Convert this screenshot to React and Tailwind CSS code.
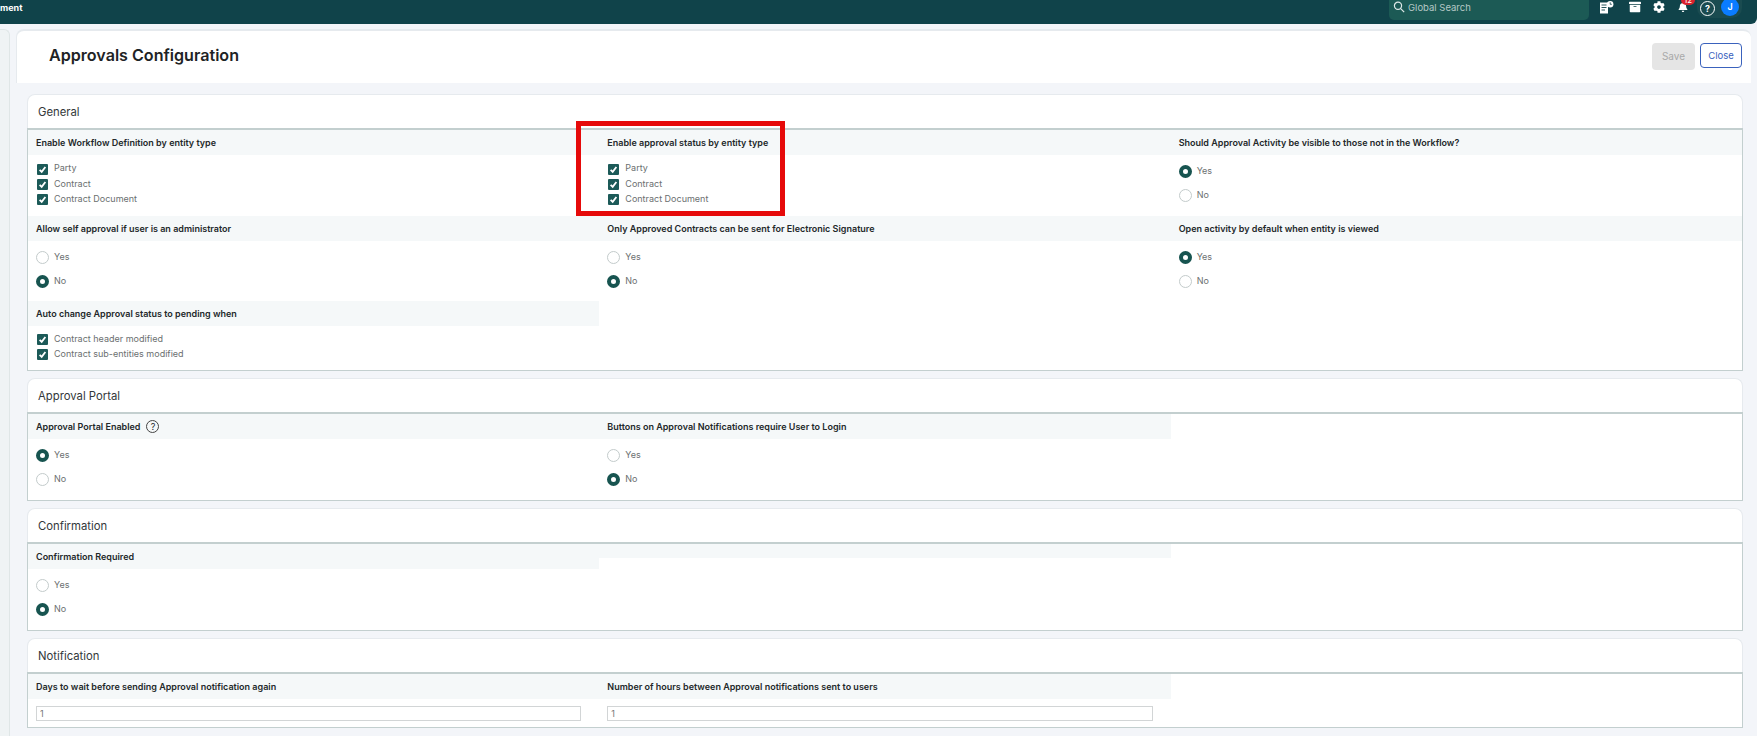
import React from "react";
import { FaBell, FaCog, FaArchive } from "react-icons/fa";

const Check = ({ label, first }) => (
  <div className="flex items-center h-[14px]">
    <span className="w-[11px] h-[11px] ml-[9px] mr-[6px] bg-[#1c5a58] rounded-[1px] flex items-center justify-center shrink-0">
      <svg width="9" height="9" viewBox="0 0 10 10" fill="none">
        <path d="M1.8 5.3 L4.1 7.6 L8.2 2.2" stroke="white" strokeWidth="2" />
      </svg>
    </span>
    <span className={`text-[9px] text-[#6b6f70] leading-none ${first ? "-mt-[3px]" : "-mt-[1px]"}`}>{label}</span>
  </div>
);

const Radio = ({ label, on }) => (
  <div className="flex items-center h-[23.5px] pl-[8px]">
    <span className={`w-[13px] h-[13px] rounded-full bg-white shrink-0 mr-[5px] ${on ? "border-[4px] border-[#175450]" : "border border-[#c3cbcb]"}`} />
    <span className="text-[9px] text-[#6b6f70] leading-none mb-[2px]">{label}</span>
  </div>
);

const Band = ({ children, short }) => (
  <div className={`${short ? "h-[14px]" : "h-[25px]"} bg-[#f5f8f9] pl-[8px] flex items-center gap-[6px] text-[9px] font-semibold text-[#23282a] whitespace-nowrap`}>
    {children}
  </div>
);

const Section = ({ title, children }) => (
  <section>
    <div className="h-[34px] pt-[1px] bg-white rounded-t-[8px] border-t border-x border-[#e6eaee] pl-[10px] flex items-center text-[11.3px] text-[#33383a]">
      {title}
    </div>
    <div className="bg-white border-t-2 border-x border-b border-[#c3cfcf] grid grid-cols-3">
      {children}
    </div>
  </section>
);

const Checks = ({ items, pt = "pt-[7px]" }) => (
  <div className={`${pt} flex flex-col gap-px`}>
    {items.map((i, n) => (
      <Check key={i} label={i} first={items.length === 3 && n === 0} />
    ))}
  </div>
);

const Radios = ({ yes, h = "h-[60px]" }) => (
  <div className={`${h} pt-[5px]`}>
    <Radio label="Yes" on={yes} />
    <Radio label="No" on={!yes} />
  </div>
);

const Cell = ({ label, children }) => (
  <div>
    <Band>{label}</Band>
    {children}
  </div>
);

const Field = ({ label }) => (
  <div>
    <Band>{label}</Band>
    <div className="h-[28px] pt-[7px] pl-[8px] pr-[18px]">
      <input
        readOnly
        value="1"
        className="block w-full h-[15px] border border-[#d2d5d6] bg-white px-[3px] text-[9px] text-[#777]"
      />
    </div>
  </div>
);

export default function App() {
  return (
    <div className="relative h-[736px] overflow-hidden bg-[#f3f5f9] font-['Inter','Liberation_Sans',sans-serif]">
      <header className="h-6 bg-[#10434a] rounded-br-[6px] flex items-start">
        <span className="text-white text-[9px] font-bold leading-none mt-[3px]">ment</span>
        <div className="ml-auto flex items-start">
          <div className="w-[200px] h-5 bg-[#1c5a55] rounded-b-[5px] flex items-start pl-[4px] gap-[3px] text-[9.5px] leading-[15px] text-[#b4c8c5]">
            <svg className="mt-px" width="12" height="12" viewBox="0 0 12 12" fill="none" stroke="#dfe9e8" strokeWidth="1.2">
              <circle cx="5" cy="4.8" r="3.6" />
              <path d="M7.7 7.6 L11.2 11.2" />
            </svg>
            Global Search
          </div>
          <div className="relative w-[108px] h-6 text-white">
            <svg className="absolute left-[11px] top-[1px]" width="14" height="13" viewBox="0 0 14 13">
              <path d="M0 1.5h8v11H0z" fill="white" />
              <path d="M1.5 4h5M1.5 6.5h5M1.5 9h3.5" stroke="#10434a" strokeWidth="0.9" />
              <circle cx="10.2" cy="3.2" r="3.2" fill="white" />
              <path d="M10.2 1.3v2h1.6" stroke="#10434a" strokeWidth="0.8" fill="none" />
            </svg>
            <FaArchive className="absolute left-[40px] top-[1px]" size={12} />
            <FaCog className="absolute left-[64px] top-[1px]" size={12} />
            <FaBell className="absolute left-[89px] top-[2px]" size={10} />
            <span className="absolute left-[92px] top-[-5px] w-[14px] h-[10px] rounded-full bg-[#d9232e] text-white text-[8px] leading-[10px] text-center">12</span>
          </div>
          <div className="w-[45px] h-[18px] mr-[15px] rounded-b-[10px] bg-[#1a4b50] flex items-start gap-[6px] pl-[3px]">
            <span className="mt-[1px] w-[15px] h-[15px] rounded-full border border-white text-white text-[9px] font-bold flex items-center justify-center">?</span>
            <span className="w-[18px] h-[18px] -mt-[2px] rounded-full bg-[#0a7cff] text-white text-[9px] font-semibold flex items-center justify-center">J</span>
          </div>
        </div>
      </header>

      <div className="flex h-[712px]">
        <aside className="w-[10px] mt-[5px] bg-[#eff3f4] border-r border-t border-[#dfe6e6] rounded-tr-[6px] shrink-0" />
        <main className="ml-[6px] mr-[6px] flex-1 min-w-0">
          <div className="mt-[5px] h-[54px] bg-white border-t-2 border-l border-[#e6eaee] rounded-t-[8px] flex items-start">
            <h1 className="ml-[32px] mt-[14px] text-[16.1px] leading-[20px] font-semibold text-[#1e2325]">Approvals Configuration</h1>
            <div className="ml-auto mr-[9px] mt-[12px] flex items-start gap-[5px]">
              <button className="w-[43px] h-[27px] bg-[#e5e5e5] rounded-[4px] text-[#a9a9a9] text-[10px]">Save</button>
              <button className="w-[42px] h-[25px] pt-[1px] bg-white border border-[#3a62bd] rounded-[4px] text-[#3a62bd] text-[9.5px]">Close</button>
            </div>
          </div>

          <div className="pl-[11px] pr-[8px] pt-[11px] flex flex-col gap-[7px]">
            <Section title="General">
              <Cell label="Enable Workflow Definition by entity type">
                <div className="h-[61px]"><Checks items={["Party", "Contract", "Contract Document"]} /></div>
              </Cell>
              <Cell label="Enable approval status by entity type">
                <div className="h-[61px]"><Checks items={["Party", "Contract", "Contract Document"]} /></div>
              </Cell>
              <Cell label="Should Approval Activity be visible to those not in the Workflow?">
                <Radios yes h="h-[61px]" />
              </Cell>
              <Cell label="Allow self approval if user is an administrator"><Radios yes={false} /></Cell>
              <Cell label="Only Approved Contracts can be sent for Electronic Signature"><Radios yes={false} /></Cell>
              <Cell label="Open activity by default when entity is viewed"><Radios yes /></Cell>
              <Cell label="Auto change Approval status to pending when">
                <div className="h-[44px]">
                  <Checks pt="pt-[6px]" items={["Contract header modified", "Contract sub-entities modified"]} />
                </div>
              </Cell>
            </Section>

            <Section title="Approval Portal">
              <Cell
                label={
                  <>
                    Approval Portal Enabled
                    <span className="w-[13px] h-[13px] rounded-full border border-[#444] text-[9px] font-normal flex items-center justify-center">?</span>
                  </>
                }
              >
                <Radios yes h="h-[61px]" />
              </Cell>
              <Cell label="Buttons on Approval Notifications require User to Login"><Radios yes={false} h="h-[61px]" /></Cell>
            </Section>

            <Section title="Confirmation">
              <Cell label="Confirmation Required"><Radios yes={false} h="h-[61px]" /></Cell>
              <div><Band short /></div>
            </Section>

            <Section title="Notification">
              <Field label="Days to wait before sending Approval notification again" />
              <Field label="Number of hours between Approval notifications sent to users" />
            </Section>
          </div>
        </main>
      </div>

      <div className="absolute left-[576px] top-[121px] w-[209px] h-[95px] border-[5px] border-[#e60a0a]" />
    </div>
  );
}
